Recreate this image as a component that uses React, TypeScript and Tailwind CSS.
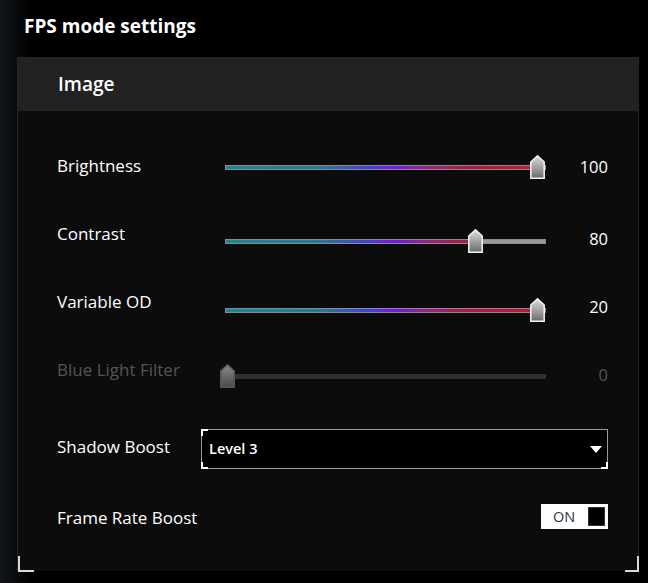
import React from 'react';

const FONT = { fontFamily: '"Open Sans", "Noto Sans", sans-serif' };
const TRACK_W = 321;

interface SliderRowProps {
  label: string;
  value: number;
  max: number;
  shown: string;
  disabled?: boolean;
  offset: string;
  numOffset: string;
}

const Thumb: React.FC<{ disabled?: boolean; id: string }> = ({ disabled, id }) => (
  <svg width="15" height="24" viewBox="0 0 15 24">
    <defs>
      <linearGradient id={id} x1="0" y1="0" x2="0" y2="1">
        <stop offset="0" stopColor={disabled ? '#8a8a8a' : '#dedede'} />
        <stop offset="1" stopColor={disabled ? '#4a4a4a' : '#6a6a6a'} />
      </linearGradient>
    </defs>
    <path
      d="M0.8 7 L7.5 0.8 L14.2 7 V23.2 H0.8 Z"
      fill={`url(#${id})`}
      stroke={disabled ? '#5a5a5a' : '#f4f4f4'}
      strokeWidth="1.5"
    />
  </svg>
);

const SliderRow: React.FC<SliderRowProps> = ({ label, value, max, shown, disabled, offset, numOffset }) => {
  const pct = value / max;
  const thumbX = 2 + pct * 310; // centre of thumb measured from track start
  return (
    <div className="flex h-[68px] items-center">
      <div className={`w-[168px] text-[17px] ${disabled ? 'text-[#555]' : 'text-white'}`}>{label}</div>
      <div className={`flex h-full items-center ${offset}`}>
        <div className="relative h-[24px] w-[321px]">
          {disabled ? (
            <div className="absolute left-0 top-[10px] h-[5px] w-full bg-[#303030]" />
          ) : (
            <div className="absolute left-0 top-[10px] h-[5px] w-full border border-[#8c8c8c] bg-[#9a9a9a]">
              <div
                className="h-full bg-[linear-gradient(90deg,#1a8796_0%,#1d7f98_28%,#3a49d6_42%,#7a14f2_52%,#99207f_64%,#b5163f_76%,#bb1a3a_100%)] bg-no-repeat"
                style={{ width: thumbX, backgroundSize: `${TRACK_W}px 100%` }}
              />
            </div>
          )}
          <div className="absolute top-0" style={{ left: thumbX - 7.5 }}>
            <Thumb disabled={disabled} id={`g-${label.replace(/\s/g, '')}`} />
          </div>
        </div>
      </div>
      <div
        className={`flex-1 text-right text-[16.5px] ${numOffset} ${disabled ? 'text-[#555]' : 'text-white'}`}
      >
        {shown}
      </div>
    </div>
  );
};

const Corner: React.FC<{ className: string }> = ({ className }) => (
  <span className={`absolute h-[7px] w-[7px] border-white ${className}`} />
);

export default function App() {
  return (
    <div
      className="relative h-[583px] w-[648px] overflow-hidden bg-[linear-gradient(90deg,#0e151b_0px,#080b0e_16px,#000_30px)]"
      style={FONT}
    >
      <div className="pl-[24px] pt-[12px] text-[19px] font-bold leading-[28px] text-white">FPS mode settings</div>

      <div className="relative ml-[17px] mt-[17px] w-[622px] border-x border-t border-[#262626]">
        <div className="flex h-[53px] items-center bg-[#222] pl-[40px] text-[19px] font-semibold text-white">
          Image
        </div>

        <div className="h-[460px] bg-[#0c0c0c] pl-[39px] pr-[30px] pt-[21px]">
          <SliderRow label="Brightness" value={100} max={100} shown="100" offset="pt-[2px]" numOffset="mt-[2px]" />
          <SliderRow label="Contrast" value={80} max={100} shown="80" offset="pt-[14px]" numOffset="mt-[10px]" />
          <SliderRow label="Variable OD" value={20} max={20} shown="20" offset="pt-[16px]" numOffset="mt-[10px]" />
          <SliderRow
            label="Blue Light Filter"
            value={0}
            max={100}
            shown="0"
            disabled
            offset="pt-[12px]"
            numOffset="mt-[10px]"
          />

          <div className="mt-[25px] flex items-center">
            <div className="w-[144px] pb-[4px] text-[17px] text-white">Shadow Boost</div>
            <div className="relative flex h-[40px] flex-1 items-center justify-between border border-[#9a9a9a] bg-black pl-[7px] pr-[5px]">
              <Corner className="-left-px -top-px border-l-2 border-t-2" />
              <Corner className="-bottom-px -left-px border-b-2 border-l-2" />
              <Corner className="-bottom-px -right-px border-b-2 border-r-2" />
              <span className="text-[14.5px] font-semibold text-white">Level 3</span>
              <svg width="12" height="7" viewBox="0 0 12 7">
                <path d="M0 0 H12 L6 7 Z" fill="#fff" />
              </svg>
            </div>
          </div>

          <div className="mt-[34px] flex items-center justify-between">
            <div className="mt-[2px] text-[17px] text-white">Frame Rate Boost</div>
            <div className="flex h-[25px] w-[67px] items-center justify-between bg-white pl-[12px] pr-[3px]">
              <span className="text-[14.5px] text-[#2b3440]">ON</span>
              <span className="h-[19px] w-[17px] border border-[#333] bg-black" />
            </div>
          </div>
        </div>

        <span className="absolute -bottom-px left-0 h-[16px] w-[16px] border-b-2 border-l-2 border-[#d8d8d8]" />
        <span className="absolute -bottom-px -right-px h-[16px] w-[14px] border-b-2 border-r-2 border-[#d8d8d8]" />
      </div>
    </div>
  );
}
